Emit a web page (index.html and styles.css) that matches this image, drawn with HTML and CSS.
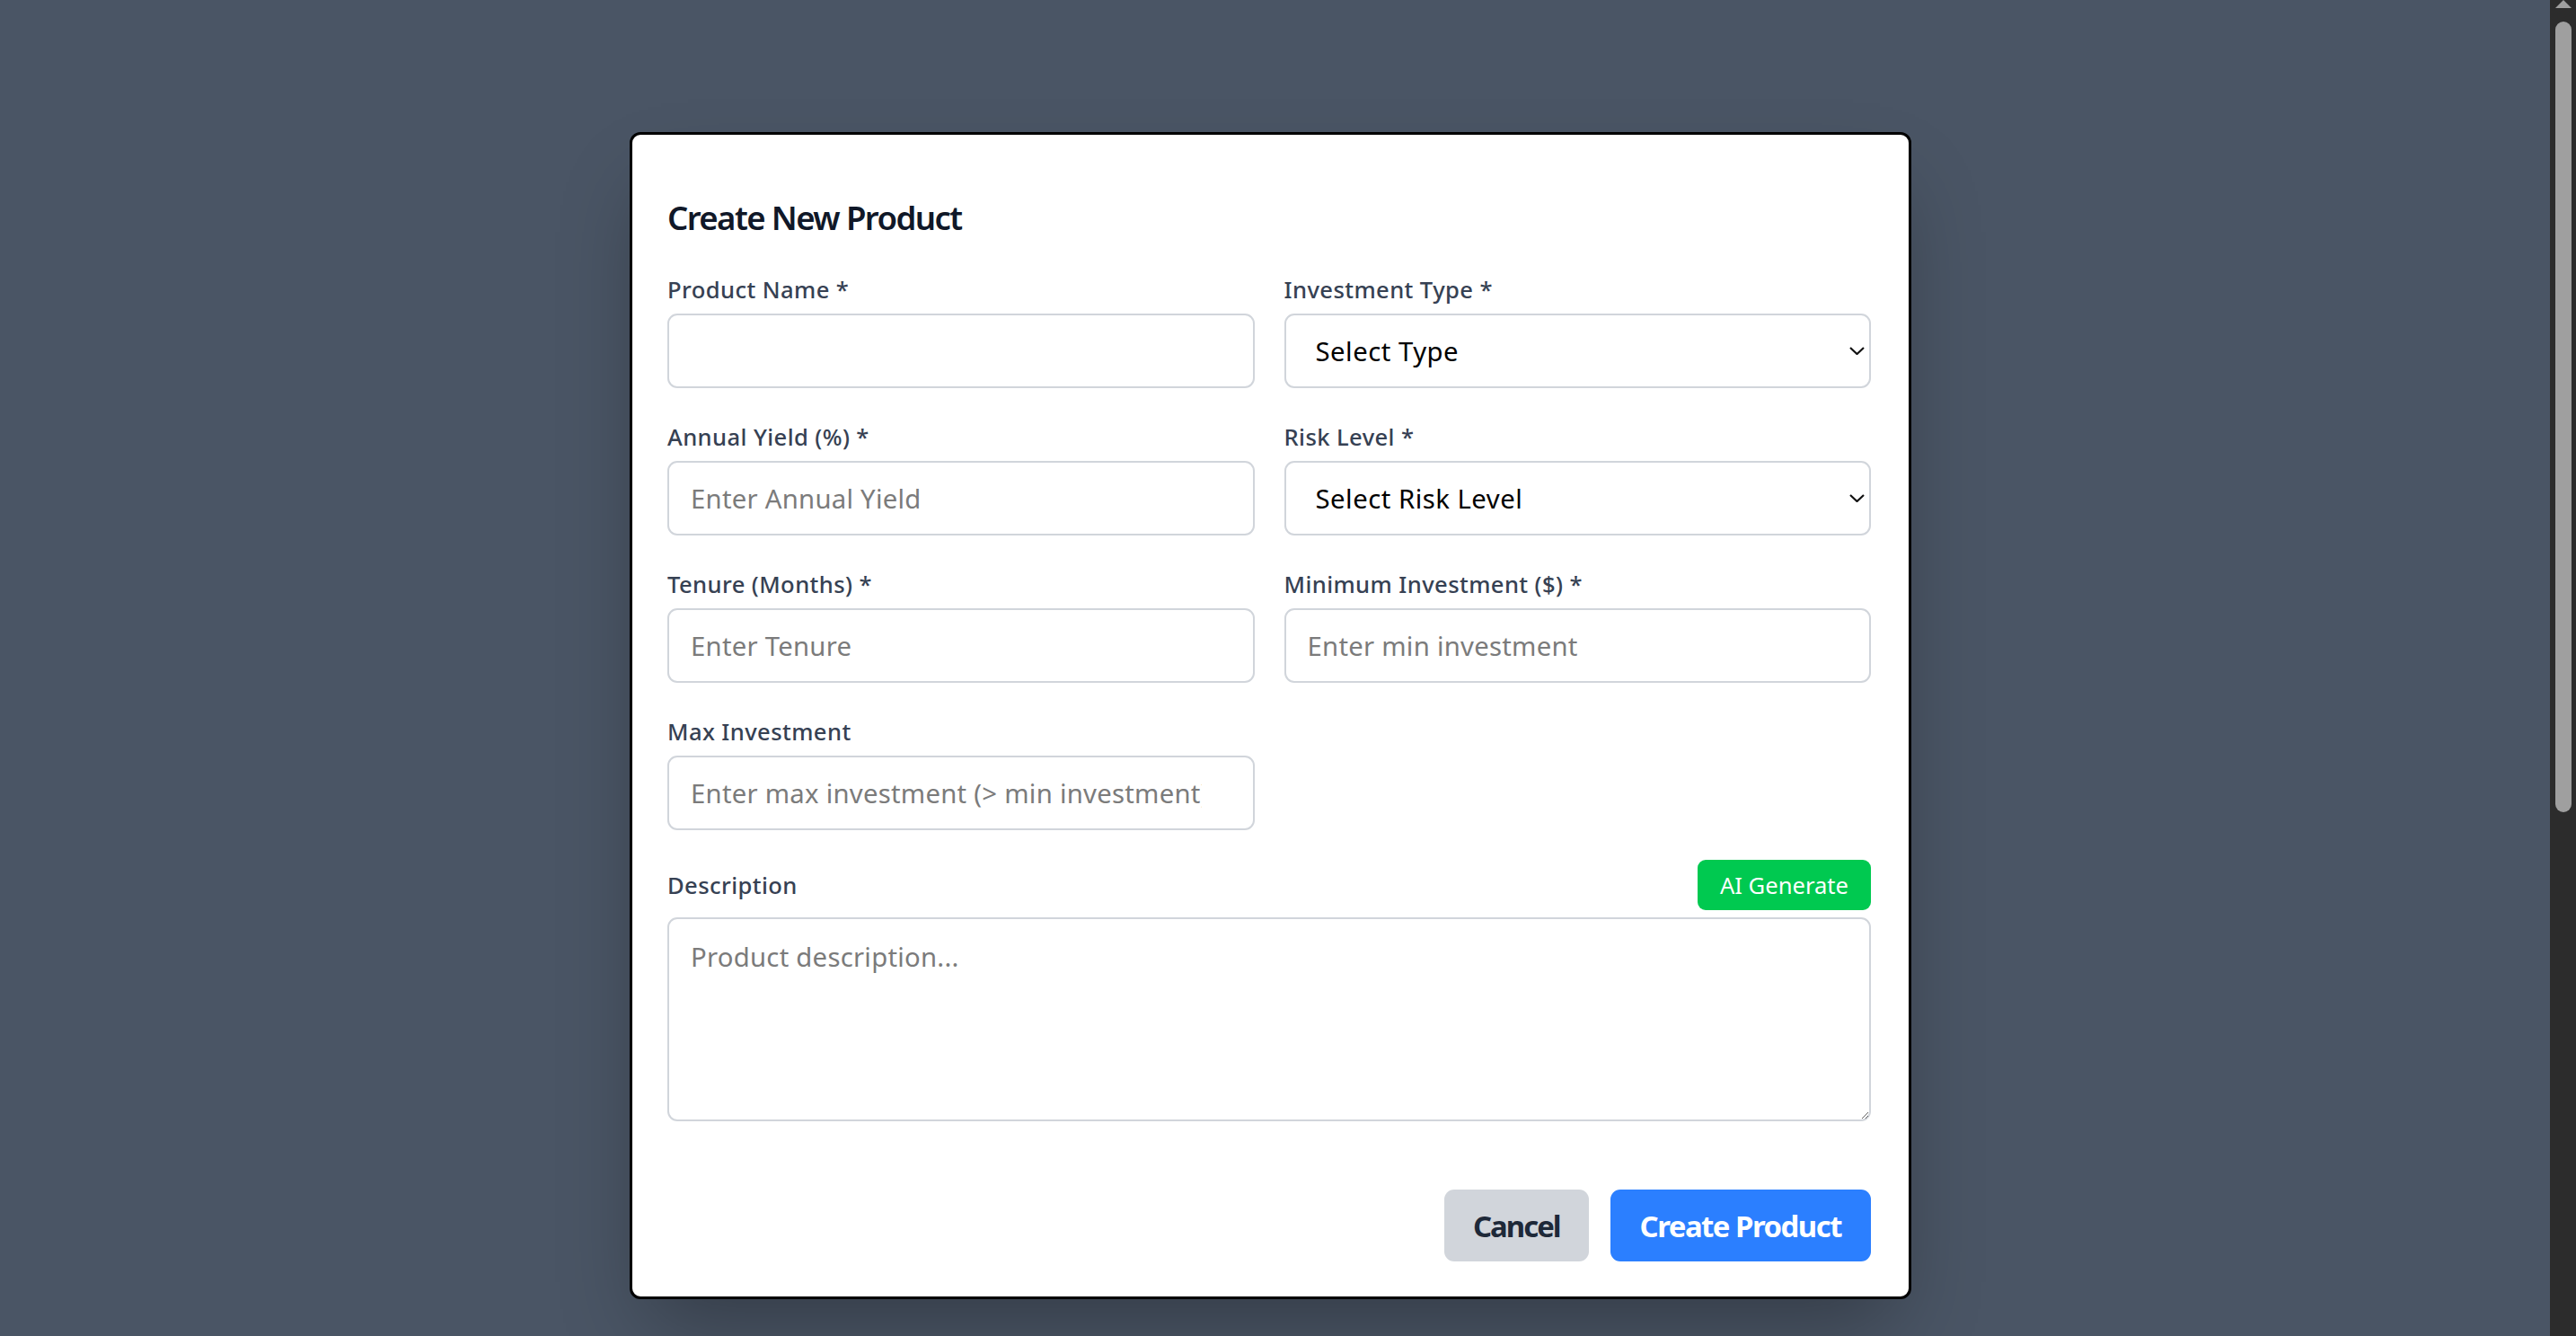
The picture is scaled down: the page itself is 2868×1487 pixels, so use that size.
FILE: index.html
```html
<!DOCTYPE html>
<html lang="en">
<head>
<meta charset="utf-8">
<title>Create New Product</title>
<link rel="stylesheet" href="styles.css">
</head>
<body>
<div class="backdrop">
  <div class="modal">
    <h2 class="modal-title">Create New Product</h2>
    <form class="form">
      <div class="grid">
        <div class="field">
          <label class="label">Product Name *</label>
          <input class="control" type="text">
        </div>
        <div class="field">
          <label class="label">Investment Type *</label>
          <div class="select-wrap">
            <select class="control select"><option>Select Type</option></select>
            <svg class="chevron" viewBox="0 0 17 9" width="17" height="9"><path d="M1 1 L8.5 8 L16 1" fill="none" stroke="#111" stroke-width="2.2"/></svg>
          </div>
        </div>
        <div class="field">
          <label class="label">Annual Yield (%) *</label>
          <input class="control num" type="text" placeholder="Enter Annual Yield">
        </div>
        <div class="field">
          <label class="label">Risk Level *</label>
          <div class="select-wrap">
            <select class="control select"><option>Select Risk Level</option></select>
            <svg class="chevron" viewBox="0 0 17 9" width="17" height="9"><path d="M1 1 L8.5 8 L16 1" fill="none" stroke="#111" stroke-width="2.2"/></svg>
          </div>
        </div>
        <div class="field">
          <label class="label">Tenure (Months) *</label>
          <input class="control num" type="text" placeholder="Enter Tenure">
        </div>
        <div class="field">
          <label class="label">Minimum Investment ($) *</label>
          <input class="control num" type="text" placeholder="Enter min investment">
        </div>
        <div class="field">
          <label class="label">Max Investment</label>
          <input class="control num" type="text" placeholder="Enter max investment (> min investment)">
        </div>
      </div>
      <div class="desc">
        <div class="desc-head">
          <label class="label label-inline">Description</label>
          <button type="button" class="btn-ai">AI Generate</button>
        </div>
        <textarea class="control textarea" placeholder="Product description..."></textarea>
      </div>
      <div class="footer">
        <button type="button" class="btn btn-cancel">Cancel</button>
        <button type="button" class="btn btn-primary">Create Product</button>
      </div>
    </form>
  </div>
</div>
<div class="scrollbar">
  <div class="scroll-arrow"></div>
  <div class="scroll-thumb"></div>
</div>
</body>
</html>
```
FILE: styles.css
```css
* { box-sizing: border-box; }
html, body { margin: 0; height: 1487px; overflow: hidden; }
body {
  display: flex;
  background: #4a5565;
  font-family: "Noto Sans", "Open Sans", sans-serif;
}
.backdrop {
  flex: 1;
  display: flex;
  justify-content: center;
  align-items: flex-start;
  padding-top: 147px;
  padding-right: 10px;
}
.modal {
  width: 1427px;
  background: #fff;
  border: 3px solid #000;
  border-radius: 12px;
  padding: 67px 42px 39px 39px;
  box-shadow: 0 46px 90px -20px rgba(0, 0, 0, 0.3);
}
.modal-title {
  margin: 0 0 36px;
  font-size: 36.6px;
  line-height: 51px;
  font-weight: 600;
  letter-spacing: -1.6px;
  color: #101828;
}
.form { margin: 0; }
.grid {
  display: grid;
  grid-template-columns: 1fr 1fr;
  column-gap: 33px;
  row-gap: 36px;
}
.field { display: flex; flex-direction: column; }
.label {
  display: block;
  font-size: 25.6px;
  line-height: 37px;
  font-weight: 500;
  letter-spacing: 0.4px;
  color: #364153;
  margin-bottom: 8px;
}
.label-inline { margin-bottom: 0; }
.control {
  width: 100%;
  height: 83px;
  border: 2px solid #d1d5db;
  border-radius: 11px;
  padding: 0 24px;
  font-family: inherit;
  font-size: 29.3px;
  letter-spacing: 0.25px;
  color: #000;
  background: #fff;
  outline: none;
}
.control::placeholder { color: #7b7b7b; }
.num { padding-right: 57px; }
.select-wrap { position: relative; }
.select {
  appearance: none;
  -webkit-appearance: none;
  padding-left: 33px;
  letter-spacing: 0.5px;
}
.chevron {
  position: absolute;
  right: 7px;
  top: 37px;
  pointer-events: none;
}
.desc { margin-top: 33px; }
.desc-head {
  display: flex;
  align-items: center;
  justify-content: space-between;
  margin-bottom: 8px;
}
.btn-ai {
  height: 56px;
  padding: 0 25px;
  border: 0;
  border-radius: 9px;
  background: #00c950;
  color: #fff;
  font-family: inherit;
  font-size: 25.6px;
  line-height: 37px;
}
.textarea {
  display: block;
  height: 227px;
  padding: 20px 24px;
  line-height: 44px;
  resize: vertical;
}
.footer {
  display: flex;
  justify-content: flex-end;
  gap: 24px;
  margin-top: 76px;
}
.btn {
  height: 80px;
  padding: 0 33px;
  border: 0;
  border-radius: 11px;
  font-family: inherit;
  font-size: 32.9px;
  font-weight: 700;
  letter-spacing: -1.5px;
}
.btn-cancel { background: #d1d5db; color: #1e2939; padding: 0 32px; letter-spacing: -2px; }
.btn-primary { background: #2b7fff; color: #fff; }
.scrollbar {
  width: 29px;
  flex: none;
  background: #2c2c2c;
  display: flex;
  flex-direction: column;
  align-items: center;
}
.scroll-arrow {
  width: 0;
  height: 0;
  border-left: 9px solid transparent;
  border-right: 9px solid transparent;
  border-bottom: 9px solid #9f9f9f;
}
.scroll-thumb {
  width: 18px;
  height: 880px;
  margin-top: 15px;
  border-radius: 9px;
  background: #9f9f9f;
}
```
